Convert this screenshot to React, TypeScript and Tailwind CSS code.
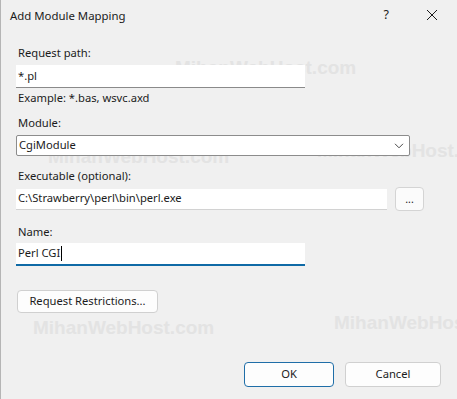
import React from "react";

const font = { fontFamily: '"Segoe UI", "Noto Sans", "Open Sans", sans-serif' };

function Watermark({ className }: { className: string }) {
  return (
    <div
      className={`absolute pointer-events-none font-bold text-[19px] leading-none text-[#e3e3e3] whitespace-nowrap ${className}`}
      style={{ fontFamily: '"Liberation Sans", Arial, sans-serif' }}
    >
      MihanWebHost.com
    </div>
  );
}

export default function App() {
  return (
    <div
      className="relative w-[457px] h-[399px] overflow-hidden bg-[#f0f0f0] text-[11.2px] text-[#1b1b1b] border-l border-[#b5b5b5]"
      style={font}
    >
      <Watermark className="left-[174px] top-[58px]" />
      <Watermark className="left-[316px] top-[141px]" />
      <Watermark className="left-[47px] top-[147px]" />
      <Watermark className="left-[32px] top-[318px]" />
      <Watermark className="left-[333px] top-[313px]" />

      <div className="relative">
        {/* title bar */}
        <div className="flex items-center h-[30px] pl-[9px]">
          <span className="text-[11.4px] leading-[16px] mt-[1px]">Add Module Mapping</span>
          <span className="ml-auto mr-[37px] text-[12.5px] leading-[16px]">?</span>
          <svg width="12" height="12" viewBox="0 0 12 12" className="mr-[19px]">
            <path d="M1 1 L11 11 M11 1 L1 11" stroke="#1b1b1b" strokeWidth="1" fill="none" />
          </svg>
        </div>

        <div className="pl-[15px] flex flex-col items-start">
          <div className="mt-[15px] leading-[16px] pl-[2px]">Request path:</div>
          <div className="mt-[4px] h-[23px] w-[289px] bg-white border-b border-[#8a8a8a] flex items-center pl-[2px]">
            *.pl
          </div>
          <div className="mt-[2px] leading-[16px] pl-[2px]">Example: *.bas, wsvc.axd</div>

          <div className="mt-[9px] leading-[16px] pl-[2px]">Module:</div>
          <div className="mt-[4px] h-[21px] w-[394px] bg-white border border-[#8c8c8c] rounded-[2px] flex items-center pl-[2px] pr-[5px]">
            <span>CgiModule</span>
            <svg width="10" height="6" viewBox="0 0 10 6" className="ml-auto">
              <path d="M1 0.8 L5 4.8 L9 0.8" stroke="#4a4a4a" strokeWidth="1" fill="none" />
            </svg>
          </div>

          <div className="mt-[12px] leading-[16px] pl-[2px]">Executable (optional):</div>
          <div className="mt-[3px] flex items-center">
            <div className="h-[21px] w-[371px] bg-white border-b border-[#d2d2d2] flex items-center pl-[2px]">
              C:\Strawberry\perl\bin\perl.exe
            </div>
            <div className="ml-[8px] h-[24px] w-[29px] bg-[#fbfbfb] border border-[#d4d4d4] rounded-[4px] flex items-center justify-center text-[10.5px] leading-none">
              ...
            </div>
          </div>

          <div className="mt-[13px] leading-[16px] pl-[2px]">Name:</div>
          <div className="mt-[3px] h-[23px] w-[289px] bg-white border-b-[2px] border-[#0f6aa6] flex items-center pl-[2px]">
            <span>Perl CGI</span>
            <span className="inline-block w-[1px] h-[15px] bg-black ml-[1px]" />
          </div>

          <div className="mt-[24px] ml-[1px] h-[23px] w-[141px] bg-[#fdfdfd] border border-[#d0d0d0] rounded-[4px] flex items-center justify-center">
            Request Restrictions...
          </div>
        </div>

        <div className="mt-[49px] flex pl-[243px] gap-[11px]">
          <div className="h-[25px] w-[90px] bg-[#fdfdfd] border border-[#1f6ea8] rounded-[4px] flex items-center justify-center">
            OK
          </div>
          <div className="h-[25px] w-[96px] bg-[#fdfdfd] border border-[#d0d0d0] rounded-[4px] flex items-center justify-center">
            Cancel
          </div>
        </div>
      </div>
    </div>
  );
}
